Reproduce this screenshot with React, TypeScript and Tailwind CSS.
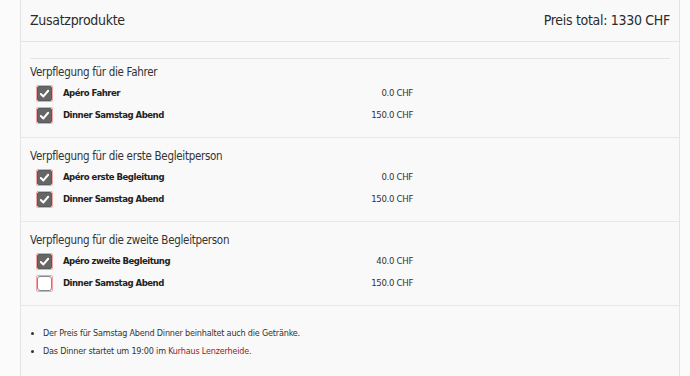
const sections = [
  {
    title: "Verpflegung für die Fahrer",
    pt: "pt-[3px]",
    items: [
      { label: "Apéro Fahrer", price: "0.0 CHF", checked: true },
      { label: "Dinner Samstag Abend", price: "150.0 CHF", checked: true },
    ],
  },
  {
    title: "Verpflegung für die erste Begleitperson",
    pt: "pt-[8px]",
    items: [
      { label: "Apéro erste Begleitung", price: "0.0 CHF", checked: true },
      { label: "Dinner Samstag Abend", price: "150.0 CHF", checked: true },
    ],
  },
  {
    title: "Verpflegung für die zweite Begleitperson",
    pt: "pt-[8px]",
    items: [
      { label: "Apéro zweite Begleitung", price: "40.0 CHF", checked: true },
      { label: "Dinner Samstag Abend", price: "150.0 CHF", checked: false },
    ],
  },
];

function Checkbox({ checked }: { checked: boolean }) {
  return (
    <span className="flex h-[17px] w-[17px] items-center justify-center border border-[#f3a5a5] rounded-[2px]">
      <span
        className={
          checked
            ? "flex h-[15px] w-[15px] items-center justify-center rounded-[2px] bg-[#666] border border-[#5a5a5a]"
            : "flex h-[15px] w-[15px] items-center justify-center rounded-[3px] bg-white border border-[#8a8a8a]"
        }
      >
        {checked && (
          <svg width="11" height="11" viewBox="0 0 12 12">
            <polyline
              points="2,6.5 4.8,9.2 10,3"
              fill="none"
              stroke="#fff"
              strokeWidth="2.2"
              strokeLinecap="round"
              strokeLinejoin="round"
            />
          </svg>
        )}
      </span>
    </span>
  );
}

export default function App() {
  return (
    <div className="h-[376px] bg-[#fbfbfb] pl-[20px] pr-[10px] text-[#333] font-[family-name:'Liberation_Sans_Narrow','DejaVu_Sans_Condensed','Arial_Narrow',sans-serif]">
      <div className="h-full border-x border-[#e4e4e4] bg-[#f9f9f9]">
        <div className="flex h-[42px] items-center justify-between border-b border-[#e4e4e4] px-[9px] text-[14px] tracking-[-0.3px] text-[#2b2b2b]">
          <h2>Zusatzprodukte</h2>
          <span>Preis total: 1330 CHF</span>
        </div>

        <div className="mx-[9px] mt-[16px] border-t border-[#e4e4e4]" />

        {sections.map((s) => (
          <div key={s.title} className={`border-b border-[#e8e8e8] pb-[11px] ${s.pt}`}>
            <div className="px-[9px] text-[11.5px] leading-[20px] tracking-[-0.3px] text-[#333]">{s.title}</div>
            {s.items.map((it, i) => (
              <div key={i} className="ml-[15px] flex h-[22px] w-[377px] items-center">
                <Checkbox checked={it.checked} />
                <span className="ml-[10px] text-[9.5px] font-bold tracking-[-0.5px] text-[#222]">{it.label}</span>
                <span className="ml-auto text-[9.5px] tracking-[-0.3px] text-[#333]">{it.price}</span>
              </div>
            ))}
          </div>
        ))}

        <ul className="list-disc pl-[22px] pt-[18px] text-[9px] leading-[18px] tracking-[-0.2px] text-[#333]">
          <li>Der Preis für Samstag Abend Dinner beinhaltet auch die Getränke.</li>
          <li>
            Das Dinner startet um 19:00 im <span className="text-[#a01818]">Kurhaus Lenzerheide</span>.
          </li>
        </ul>
      </div>
    </div>
  );
}
